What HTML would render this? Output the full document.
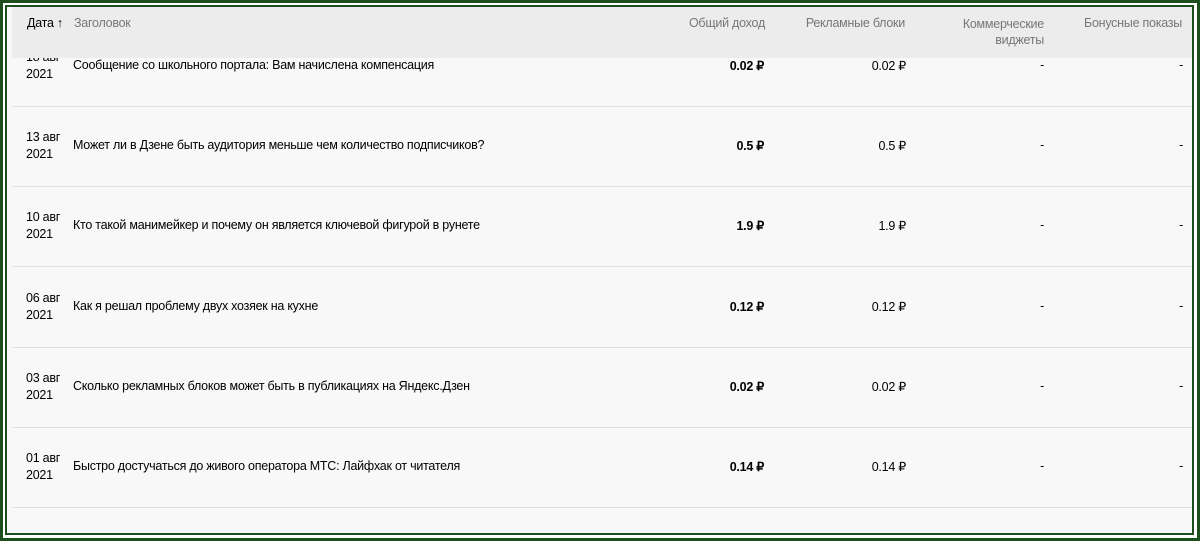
<!DOCTYPE html>
<html><head><meta charset="utf-8"><style>
*{margin:0;padding:0;box-sizing:border-box}
body{width:1200px;height:541px;overflow:hidden;background:#1e4d1e;font-family:"Liberation Sans",sans-serif;font-size:12.5px;color:#000;position:relative}
.w1{position:absolute;left:3px;top:3px;right:3px;bottom:3px;background:#fff}
.w2{position:absolute;left:5px;top:5px;right:6px;bottom:6px;background:#1e4d1e}
.in{position:absolute;left:7px;top:7px;right:8px;bottom:8px;background:#f8f8f8;overflow:hidden}
.hd{position:absolute;left:5px;top:0;width:1180px;height:51px;background:#ececec;z-index:2;color:#777}
.t{position:absolute;white-space:nowrap;letter-spacing:-0.25px}
.r{text-align:right}
.sep{position:absolute;left:5px;right:0;height:1px;background:#e1e1e1}
.b{font-weight:bold}
</style></head><body>
<div class="w1"></div><div class="w2"></div>
<div class="in">
<div class="hd">
<div class="t" style="left:15px;top:9px;color:#000">Дата ↑</div>
<div class="t" style="left:62px;top:9px">Заголовок</div>
<div class="t r" style="right:427px;top:9px">Общий доход</div>
<div class="t r" style="right:287px;top:9px">Рекламные блоки</div>
<div class="t r" style="right:148px;top:9px;line-height:16px">Коммерческие<br>виджеты</div>
<div class="t r" style="right:10px;top:9px">Бонусные показы</div>
</div>
<div id="rows"></div>
</div>
<script>
var d=[["18 авг","Сообщение со школьного портала: Вам начислена компенсация","0.02"],
["13 авг","Может ли в Дзене быть аудитория меньше чем количество подписчиков?","0.5"],
["10 авг","Кто такой манимейкер и почему он является ключевой фигурой в рунете","1.9"],
["06 авг","Как я решал проблему двух хозяек на кухне","0.12"],
["03 авг","Сколько рекламных блоков может быть в публикациях на Яндекс.Дзен","0.02"],
["01 авг","Быстро достучаться до живого оператора МТС: Лайфхак от читателя","0.14"]];
var h="";
for(var i=0;i<6;i++){var c=66+80.2*i-7;
h+='<div class="t" style="left:19px;top:'+(c-17)+'px;line-height:17px">'+d[i][0]+'<br>2021</div>';
h+='<div class="t" style="left:66px;top:'+(c-8)+'px">'+d[i][1]+'</div>';
h+='<div class="t r b" style="right:428px;top:'+(c-8)+'px">'+d[i][2]+' ₽</div>';
h+='<div class="t r" style="right:286px;top:'+(c-8)+'px">'+d[i][2]+' ₽</div>';
h+='<div class="t r" style="right:148px;top:'+(c-8)+'px">-</div>';
h+='<div class="t r" style="right:9px;top:'+(c-8)+'px">-</div>';
h+='<div class="sep" style="top:'+(c+40)+'px"></div>';}
document.getElementById("rows").innerHTML=h;
</script>
</body></html>
